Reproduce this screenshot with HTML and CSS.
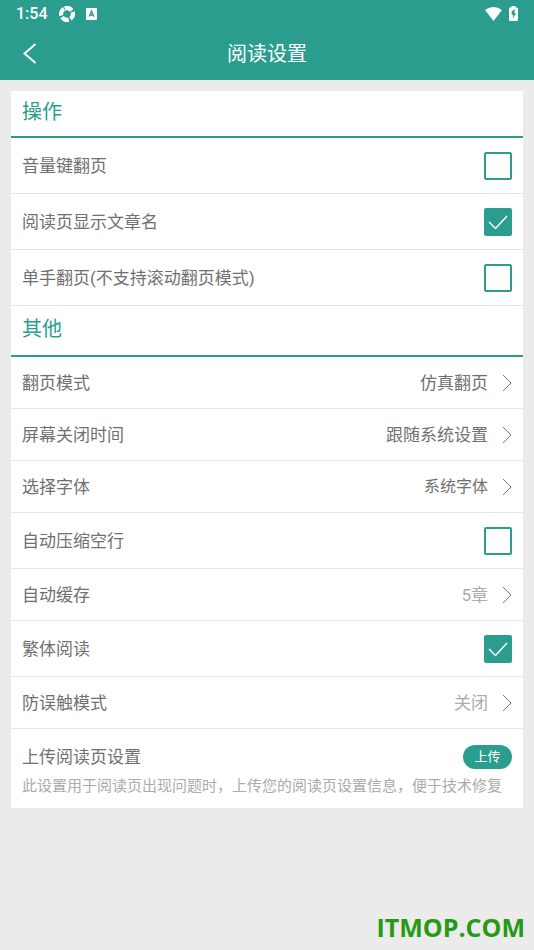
FILE: index.html
```html
<!DOCTYPE html>
<html lang="zh-CN">

<head>
    <meta charset="UTF-8">
    <meta name="viewport" content="width=device-width, initial-scale=1.0">
    <title>阅读设置</title>
    <link rel="stylesheet" href="styles.css">
</head>

<body>
    <header class="header">
        <div class="status-bar">
            <span class="time">1:54</span>
            <svg class="status-spin" viewBox="0 0 16 16" aria-hidden="true">
                <circle cx="8" cy="8" r="5.9" fill="none" stroke="#fff" stroke-width="4.2" stroke-dasharray="7.4 1.87" transform="rotate(-112 8 8)" />
            </svg>
            <svg class="status-app" viewBox="0 0 11 12" aria-hidden="true">
                <rect width="11" height="12" rx="1" fill="#fff" />
                <path d="M3.2 8.6L5.5 3L7.8 8.6M4 7h3" fill="none" stroke="#2a9d8f" stroke-width="1.4" />
            </svg>
            <svg class="status-wifi" viewBox="0 0 17 14" aria-hidden="true">
                <path d="M0 3Q8.5 -3 17 3L8.5 14z" fill="#fff" />
            </svg>
            <svg class="status-battery" viewBox="0 0 9 15" aria-hidden="true">
                <path d="M2.5 0h4v1.5H8q1 0 1 1V14q0 1-1 1H1q-1 0-1-1V2.5q0-1 1-1h1.5z" fill="#fff" />
                <path d="M6.5 3.5L2.7 5v3.8h1.6L3.6 13L6.6 8V6.8H5z" fill="#2a9d8f" />
            </svg>
        </div>
        <div class="title-bar">
            <a class="back" href="#" aria-label="返回">
                <svg viewBox="0 0 14 21" aria-hidden="true">
                    <path d="M12.5 1L1.5 10.5L12.5 20" fill="none" stroke="#fff" stroke-width="2" />
                </svg>
            </a>
            <h1 class="title">阅读设置</h1>
        </div>
    </header>

    <main class="settings">
        <h2 class="section-title">操作</h2>
        <label class="row row-check">
            <span>音量键翻页</span>
            <input class="check" type="checkbox">
        </label>
        <label class="row row-check">
            <span>阅读页显示文章名</span>
            <input class="check" type="checkbox" checked>
        </label>
        <label class="row row-check">
            <span>单手翻页(不支持滚动翻页模式)</span>
            <input class="check" type="checkbox">
        </label>

        <h2 class="section-title section-title-other">其他</h2>
        <button class="row" type="button">
            <span>翻页模式</span>
            <span class="value">仿真翻页</span>
            <svg class="arrow" viewBox="0 0 10 18" aria-hidden="true"><path d="M1 1L9 9L1 17" /></svg>
        </button>
        <button class="row" type="button">
            <span>屏幕关闭时间</span>
            <span class="value">跟随系统设置</span>
            <svg class="arrow" viewBox="0 0 10 18" aria-hidden="true"><path d="M1 1L9 9L1 17" /></svg>
        </button>
        <button class="row" type="button">
            <span>选择字体</span>
            <span class="value value-small">系统字体</span>
            <svg class="arrow" viewBox="0 0 10 18" aria-hidden="true"><path d="M1 1L9 9L1 17" /></svg>
        </button>
        <label class="row row-check">
            <span>自动压缩空行</span>
            <input class="check" type="checkbox">
        </label>
        <button class="row" type="button">
            <span>自动缓存</span>
            <span class="value value-light">5章</span>
            <svg class="arrow" viewBox="0 0 10 18" aria-hidden="true"><path d="M1 1L9 9L1 17" /></svg>
        </button>
        <label class="row row-check">
            <span>繁体阅读</span>
            <input class="check" type="checkbox" checked>
        </label>
        <button class="row" type="button">
            <span>防误触模式</span>
            <span class="value value-light">关闭</span>
            <svg class="arrow" viewBox="0 0 10 18" aria-hidden="true"><path d="M1 1L9 9L1 17" /></svg>
        </button>
        <div class="upload">
            <div class="upload-top">
                <span>上传阅读页设置</span>
                <button class="upload-button" type="button">上传</button>
            </div>
            <p class="upload-hint">此设置用于阅读页出现问题时，上传您的阅读页设置信息，便于技术修复</p>
        </div>
    </main>

    <footer class="watermark">ITMOP.COM</footer>
</body>

</html>
```

FILE: styles.css
```css
*,
*::before,
*::after {
    box-sizing: border-box;
    margin: 0;
    padding: 0;
}

body {
    min-height: 100vh;
    display: flex;
    flex-direction: column;
    background-color: #ebebeb;
    color: #707070;
    font-family: Roboto, "Noto Sans CJK SC", sans-serif;
    font-size: 17px;
    line-height: 24px;
}

.header {
    background-color: #2a9d8f;
    color: white;
}

.status-bar {
    display: flex;
    align-items: center;
    height: 27px;
    padding: 0 16px;
}

.time {
    font-size: 16px;
    font-weight: 500;
}

.status-spin {
    width: 16px;
    height: 16px;
    margin-left: 11px;
}

.status-app {
    width: 11px;
    height: 12px;
    margin-left: 11px;
}

.status-wifi {
    width: 17px;
    height: 14px;
    margin-left: auto;
}

.status-battery {
    width: 9px;
    height: 15px;
    margin-left: 7px;
}

.title-bar {
    display: grid;
    grid-template-columns: 1fr auto 1fr;
    align-items: center;
    height: 53px;
    padding: 0 23px;
}

.back svg {
    display: block;
    width: 14px;
    height: 21px;
}

.title {
    font-size: 20px;
    font-weight: 400;
}

.settings {
    margin: 11px 11px 0;
    background-color: white;
}

.section-title {
    padding: 9px 11px 12px;
    border-bottom: 2px solid #2a9d8f;
    color: #2a9d8f;
    font-size: 20px;
    font-weight: 400;
}

.section-title-other {
    padding: 11px 11px 14px;
}

.row {
    display: flex;
    align-items: center;
    width: 100%;
    height: 52px;
    padding: 0 11px;
    border: none;
    border-bottom: 1px solid #e4e4e4;
    background-color: white;
    color: inherit;
    font: inherit;
    text-align: left;
    cursor: pointer;
}

.row-check {
    justify-content: space-between;
    height: 56px;
}

.check {
    appearance: none;
    width: 28px;
    height: 28px;
    border: 2px solid #2a9d8f;
    border-radius: 2px;
    cursor: pointer;
}

.check:checked {
    background: #2a9d8f url("data:image/svg+xml,%3Csvg xmlns='http://www.w3.org/2000/svg' viewBox='0 0 24 24'%3E%3Cpath d='M3 12L9.5 18.5L21 6' fill='none' stroke='white' stroke-width='1.5'/%3E%3C/svg%3E") center / 24px no-repeat;
}

.value {
    margin-left: auto;
}

.value-small {
    font-size: 16px;
}

.value-light {
    color: #ababab;
}

.arrow {
    width: 10px;
    height: 18px;
    margin-left: 14px;
    fill: none;
    stroke: #7a7a7a;
    stroke-width: 1;
}

.upload {
    padding: 16px 0 10px 11px;
}

.upload-top {
    display: flex;
    align-items: center;
    justify-content: space-between;
    padding-right: 11px;
}

.upload-button {
    width: 49px;
    height: 24px;
    border: none;
    border-radius: 12px;
    background-color: #2a9d8f;
    color: white;
    font: inherit;
    font-size: 13px;
    cursor: pointer;
}

.upload-hint {
    margin-top: 5px;
    color: #ababab;
    font-size: 15px;
}

.watermark {
    margin-top: auto;
    padding: 0 9px 7px;
    color: #269a14;
    font-family: "Open Sans", "Noto Sans", sans-serif;
    font-size: 25px;
    font-weight: 700;
    line-height: 32px;
    text-align: right;
}
```
